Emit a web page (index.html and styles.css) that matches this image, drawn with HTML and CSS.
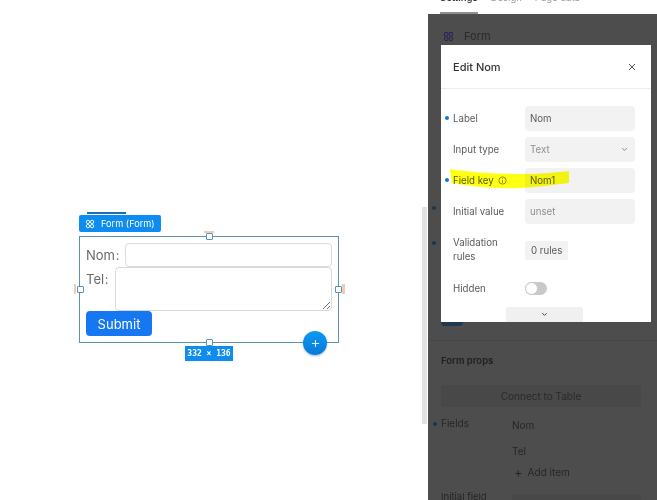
FILE: index.html
```html
<!DOCTYPE html>
<html lang="en">

<head>
    <meta charset="UTF-8">
    <title>Edit Nom</title>
    <link rel="stylesheet" href="styles.css">
</head>

<body>
    <div class="canvas">
        <span class="tab-mark"></span>
        <div class="widget-tag">
            <svg class="form-icon" viewBox="0 0 12 12"><circle cx="3.5" cy="3.5" r="2"/><circle cx="8.5" cy="3.5" r="2"/><circle cx="3.5" cy="8.5" r="2"/><circle cx="8.5" cy="8.5" r="2"/></svg>
            Form (Form)
        </div>
        <div class="frame">
            <div class="form-row">
                <label class="form-label">Nom :</label>
                <div class="form-input"></div>
            </div>
            <div class="form-row">
                <label class="form-label">Tel :</label>
                <div class="form-area">
                    <svg class="grip" viewBox="0 0 9 9"><path d="M1 8 8 1M5 8 8 5"/></svg>
                </div>
            </div>
            <button class="submit">Submit</button>
        </div>
        <span class="handle handle-top"></span>
        <span class="handle handle-left"></span>
        <span class="handle handle-right"></span>
        <span class="handle handle-bottom"></span>
        <span class="peach peach-top"></span>
        <span class="peach peach-left"></span>
        <span class="peach peach-right"></span>
        <span class="peach peach-bottom"></span>
        <div class="size-tag">332 × 136</div>
        <div class="add-btn">
            <svg viewBox="0 0 10 10"><path d="M5 1v8M1 5h8"/></svg>
        </div>
    </div>

    <div class="scroll-col">
        <div class="scroll-thumb"></div>
    </div>

    <div class="panel">
        <div class="tabs">
            <span class="tab tab-on">Settings</span>
            <span class="tab">Design</span>
            <span class="tab">Page data</span>
        </div>
        <div class="panel-body">
            <div class="panel-title">
                <svg class="form-icon dim" viewBox="0 0 12 12"><circle cx="3.5" cy="3.5" r="2"/><circle cx="8.5" cy="3.5" r="2"/><circle cx="3.5" cy="8.5" r="2"/><circle cx="8.5" cy="8.5" r="2"/></svg>
                Form
            </div>
            <div class="side-dots">
                <span class="dot dark"></span>
                <span class="dot dark"></span>
            </div>
            <div class="cut-off"></div>
            <hr class="rule">
            <div class="props-title">Form props</div>
            <div class="connect">Connect to Table</div>
            <div class="fields">
                <div class="fields-label"><span class="dot dark"></span>Fields</div>
                <div class="fields-list">
                    <div>Nom</div>
                    <div>Tel</div>
                    <div class="add-item"><span class="plus">+</span>Add item</div>
                </div>
            </div>
            <div class="initial">
                <span class="initial-label">Initial field</span>
                <span class="initial-box"></span>
            </div>
        </div>

        <div class="modal">
            <div class="modal-head">
                <span class="modal-title">Edit Nom</span>
                <svg class="close" viewBox="0 0 8 8"><path d="M1 1l6 6M7 1 1 7"/></svg>
            </div>
            <div class="modal-body">
                <div class="field">
                    <span class="dot"></span>
                    <span class="field-label">Label</span>
                    <span class="box">Nom</span>
                </div>
                <div class="field">
                    <span class="field-label">Input type</span>
                    <span class="box muted">Text
                        <svg class="chev" viewBox="0 0 8 5"><path d="M1.5 1 4 3.5 6.5 1"/></svg>
                    </span>
                </div>
                <div class="field">
                    <span class="dot"></span>
                    <span class="field-label">Field key
                        <svg class="info" viewBox="0 0 10 10"><circle cx="5" cy="5" r="4"/><path d="M5 4.5v3M5 2.5v1"/></svg>
                    </span>
                    <span class="box">Nom1</span>
                    <svg class="marker" viewBox="0 0 120 22"><path d="M0 1C20 4 40 6 75 6 95 6 105 4 119 3L119 15C100 17 90 19 70 20 40 21 20 18 2 15Z"/></svg>
                </div>
                <div class="field">
                    <span class="field-label">Initial value</span>
                    <span class="box muted">unset</span>
                </div>
                <div class="field tall">
                    <span class="field-label">Validation<br>rules</span>
                    <span class="rules">0 rules</span>
                </div>
                <div class="field short">
                    <span class="field-label">Hidden</span>
                    <span class="switch"><span class="knob"></span></span>
                </div>
            </div>
            <div class="more">
                <svg class="chev dark-chev" viewBox="0 0 8 5"><path d="M1.5 1 4 3.5 6.5 1"/></svg>
            </div>
        </div>
    </div>
</body>

</html>
```

FILE: styles.css
```css
* {
    margin: 0;
    padding: 0;
    box-sizing: border-box;
}

body {
    display: flex;
    width: 657px;
    height: 500px;
    overflow: hidden;
    background-color: #fff;
    font-family: Inter, "Liberation Sans", sans-serif;
    color: #4a4a4a;
}

/* canvas */
.canvas {
    position: relative;
    width: 422px;
    flex: none;
}

.tab-mark {
    position: absolute;
    left: 87px;
    top: 212px;
    width: 39px;
    height: 2px;
    background-color: #1a6fb5;
}

.widget-tag {
    position: absolute;
    left: 79px;
    top: 215px;
    display: flex;
    align-items: center;
    gap: 6px;
    width: 82px;
    height: 17px;
    padding-left: 6px;
    border-radius: 2px;
    background-color: #0f8cf0;
    color: #fff;
    font-size: 9.2px;
    white-space: nowrap;
}

.form-icon {
    width: 10px;
    height: 10px;
    flex: none;
    fill: none;
    stroke: #fff;
    stroke-width: 1.1;
}

.form-icon.dim {
    width: 11px;
    height: 11px;
    stroke: #2b2458;
}

.frame {
    position: absolute;
    left: 79px;
    top: 236px;
    width: 260px;
    height: 107px;
    display: flex;
    flex-direction: column;
    padding: 6px 6px 0 6px;
    border: 1px solid #5a94b5;
}

.form-row {
    display: flex;
    font-size: 13px;
    color: #6b6b6b;
}

.form-label {
    line-height: 24px;
    padding-right: 6px;
    word-spacing: -3px;
    white-space: nowrap;
}

.form-input {
    flex: 1;
    height: 24px;
    border: 1px solid #dcdcdc;
    border-radius: 4px;
    background-color: #fff;
}

.form-area {
    position: relative;
    flex: 1;
    height: 44px;
    border: 1px solid #d8d8d8;
    border-radius: 4px;
    background-color: #fff;
}

.grip {
    position: absolute;
    right: 0;
    bottom: 0;
    width: 9px;
    height: 9px;
    fill: none;
    stroke: #777;
    stroke-width: 1;
}

.submit {
    align-self: flex-start;
    width: 66px;
    height: 25px;
    border: none;
    border-radius: 4px;
    background-color: #1677f2;
    color: #fff;
    font-family: inherit;
    font-size: 13px;
}

.handle {
    position: absolute;
    width: 7px;
    height: 7px;
    border: 1.5px solid #5a94b5;
    border-radius: 1px;
    background-color: #fff;
}

.handle-top { left: 206px; top: 233px; }
.handle-left { left: 77px; top: 286px; }
.handle-right { left: 335px; top: 286px; }
.handle-bottom { left: 206px; top: 339px; }

.peach {
    position: absolute;
    background-color: #eccdb6;
}

.peach-top { left: 204px; top: 231px; width: 10px; height: 2px; }
.peach-bottom { left: 204px; top: 346px; width: 10px; height: 1px; }
.peach-left { left: 74px; top: 284px; width: 2px; height: 10px; }
.peach-right { left: 342px; top: 284px; width: 3px; height: 10px; }

.size-tag {
    position: absolute;
    left: 185px;
    top: 346px;
    width: 48px;
    height: 15px;
    background-color: #0f8cf0;
    color: #fff;
    font-family: "DejaVu Sans Mono", monospace;
    font-size: 8px;
    font-weight: bold;
    line-height: 15px;
    text-align: center;
    white-space: nowrap;
}

.add-btn {
    position: absolute;
    left: 303px;
    top: 331px;
    display: flex;
    align-items: center;
    justify-content: center;
    width: 24px;
    height: 24px;
    border-radius: 50%;
    background: linear-gradient(#0a9af0, #0a78d8);
    box-shadow: 0 1px 2px rgba(0, 80, 160, .4);
}

.add-btn svg {
    width: 9px;
    height: 9px;
    fill: none;
    stroke: #d8efff;
    stroke-width: 1.2;
}

/* scrollbar between canvas and panel */
.scroll-col {
    width: 6px;
    flex: none;
    padding-top: 207px;
}

.scroll-thumb {
    width: 5px;
    height: 217px;
    background-color: #e2e2e2;
}

/* settings panel, dimmed behind the modal */
.panel {
    position: relative;
    flex: 1;
    display: flex;
    flex-direction: column;
}

.tabs {
    display: flex;
    flex: none;
    gap: 13px;
    height: 14px;
    padding-left: 12px;
    overflow: hidden;
    font-size: 9.5px;
    color: #9a9a9a;
}

.tab {
    margin-top: -9px;
    line-height: 14px;
}

.tab-on {
    height: 23px;
    border-bottom: 2px solid #8f8f8f;
    color: #3a3a3a;
    font-weight: 600;
}

.panel-body {
    flex: 1;
    min-height: 0;
    overflow: hidden;
    padding: 15px 0 0 13px;
    background-color: #4d4d4d;
    color: #262626;
    font-size: 10px;
}

.panel-title {
    display: flex;
    align-items: center;
    gap: 10px;
    height: 14px;
    margin-left: 2px;
    font-size: 11px;
    color: #2a2a2a;
}

.side-dots {
    display: flex;
    flex-direction: column;
    gap: 31px;
    height: 279px;
    margin-left: -9px;
    padding-top: 163px;
}

.dot {
    display: inline-block;
    width: 4px;
    height: 4px;
    flex: none;
    border-radius: 50%;
    background-color: #1677c8;
}

.dot.dark {
    background-color: #17364f;
}

/* bottom of a control that the modal covers */
.cut-off {
    width: 22px;
    height: 4px;
    border-radius: 0 0 10px 10px;
    background-color: #1d3a50;
}

.rule {
    height: 1px;
    margin: 14px 0 0 -13px;
    border: none;
    background-color: #474747;
}

.props-title {
    height: 12px;
    margin-top: 14px;
    font-size: 9.5px;
    line-height: 12px;
    font-weight: 600;
    color: #1f1f1f;
}

.connect {
    width: 200px;
    height: 22px;
    margin-top: 18px;
    border-radius: 2px;
    background-color: #484848;
    font-size: 10px;
    line-height: 22px;
    text-align: center;
    color: #2a2a2a;
}

.fields {
    display: flex;
    margin-top: 9px;
}

.fields-label {
    position: relative;
    width: 71px;
    font-size: 10px;
    line-height: 14px;
}

.fields-label .dot {
    position: absolute;
    left: -8px;
    top: 6px;
}

.fields-list {
    margin-top: -4px;
    font-size: 10px;
    line-height: 26px;
}

.add-item {
    display: flex;
    align-items: center;
    gap: 5px;
    height: 17px;
    padding-left: 2px;
    line-height: 17px;
}

.plus {
    font-size: 13px;
}

.initial {
    display: flex;
    margin-top: 10px;
    font-size: 9.5px;
}

.initial-label {
    width: 71px;
}

.initial-box {
    width: 129px;
    height: 20px;
    margin-top: 3px;
    background-color: #484848;
}

/* modal */
.modal {
    position: absolute;
    left: 13px;
    top: 45px;
    width: 210px;
    height: 277px;
    display: flex;
    flex-direction: column;
    overflow: hidden;
    background-color: #fff;
}

.modal-head {
    display: flex;
    align-items: center;
    justify-content: space-between;
    flex: none;
    height: 44px;
    padding: 0 15px 0 12px;
    border-bottom: 1px solid #ececec;
}

.modal-title {
    font-size: 11px;
    font-weight: 500;
    color: #333;
}

.close {
    width: 8px;
    height: 8px;
    fill: none;
    stroke: #555;
    stroke-width: 1;
}

.modal-body {
    display: flex;
    flex-direction: column;
    gap: 6px;
    padding-top: 17px;
}

.field {
    position: relative;
    display: flex;
    align-items: center;
    height: 25px;
    padding-left: 12px;
    font-size: 9.7px;
    color: #5a5a5a;
}

.field > .dot {
    position: absolute;
    left: 4px;
    top: 10px;
}

.field-label {
    display: flex;
    align-items: center;
    gap: 4px;
    width: 72px;
    flex: none;
}

.field.tall {
    height: 32px;
    margin-top: 4px;
}

.field.tall .field-label {
    display: block;
    line-height: 14px;
}

.field.short {
    height: 14px;
    margin-top: 9px;
}

.box {
    display: flex;
    align-items: center;
    justify-content: space-between;
    width: 110px;
    height: 25px;
    padding: 0 7px 0 5px;
    border-radius: 4px;
    background-color: #f2f2f2;
}

.box.muted {
    color: #8f8f8f;
}

.chev {
    width: 7px;
    height: 5px;
    fill: none;
    stroke: #777;
    stroke-width: 1;
}

.dark-chev {
    stroke: #333;
}

.info {
    width: 9px;
    height: 9px;
    fill: none;
    stroke: #666;
    stroke-width: .8;
}

/* yellow pen stroke over the field key row */
.marker {
    position: absolute;
    left: 9px;
    top: 0;
    width: 120px;
    height: 22px;
    fill: #ffff14;
    mix-blend-mode: multiply;
}

.rules {
    padding: 3px 6px;
    border-radius: 2px;
    background-color: #f2f2f2;
    line-height: 13px;
}

.switch {
    position: relative;
    width: 22px;
    height: 13px;
    border-radius: 7px;
    background-color: #c9c9c9;
}

.knob {
    position: absolute;
    left: 0;
    top: 0;
    width: 13px;
    height: 13px;
    border: 1px solid #c9c9c9;
    border-radius: 50%;
    background-color: #fff;
}

.more {
    display: flex;
    align-items: center;
    justify-content: center;
    flex: none;
    width: 77px;
    height: 15px;
    margin: 12px 0 0 65px;
    border-radius: 3px 3px 0 0;
    background-color: #f0f0f0;
}
```
